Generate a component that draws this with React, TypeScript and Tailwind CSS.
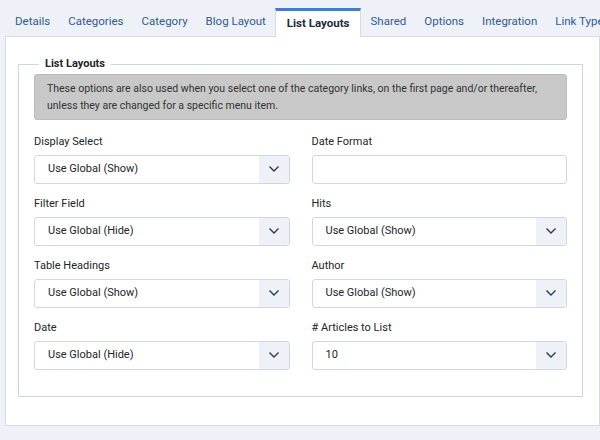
import React from "react";

const tabs = ["Details","Categories","Category","Blog Layout","List Layouts","Shared","Options","Integration","Link Type"];
const fields: [string, string | null][] = [
  ["Display Select","Use Global (Show)"],["Date Format",null],
  ["Filter Field","Use Global (Hide)"],["Hits","Use Global (Show)"],
  ["Table Headings","Use Global (Show)"],["Author","Use Global (Show)"],
  ["Date","Use Global (Hide)"],["# Articles to List","10"],
];

function Chevron() {
  return (
    <svg width="12" height="8" viewBox="0 0 12 8" fill="none" stroke="#2f3a4f" strokeWidth="1.4"><path d="M1.5 1.5 6 6l4.5-4.5"/></svg>
  );
}

export default function App() {
  return (
    <div className="w-[600px] h-[440px] bg-[#eef2f8] overflow-hidden text-[11px] text-[#22262a]" style={{fontFamily:"Roboto, sans-serif"}}>
      <div className="flex items-end h-[36px] pl-[6px] whitespace-nowrap">
        {tabs.map(t => t === "List Layouts" ? (
          <div key={t} className="shrink-0 h-[29px] px-[11px] flex items-center bg-white border-t-[3px] border-[#4a7bc6] border-x border-x-[#d6dce6] font-bold text-[#1d2a3c] text-[11.5px] -mb-px relative z-10">{t}</div>
        ) : (
          <div key={t} className="shrink-0 h-[28px] px-[9px] flex items-center text-[#2f5a96] text-[11.5px]">{t}</div>
        ))}
      </div>
      <div className="ml-[5px] bg-white border border-[#d6dce6] h-[390px] pt-[19px] pl-[12px] pr-[16px]">
        <fieldset className="border border-[#cfd5df] px-[15px] pb-[26px]">
          <legend className="px-[6px] ml-[5px] font-bold text-[#22262a] text-[11px]">List Layouts</legend>
          <div className="bg-[#c8c8c8] border border-[#bcbcbc] rounded-[3px] px-[12px] py-[5px] text-[#333] leading-[17px] text-[10.5px] mt-[1px]">
            These options are also used when you select one of the category links, on the first page and/or thereafter, unless they are changed for a specific menu item.
          </div>
          <div className="grid grid-cols-2 gap-x-[22px] gap-y-[11px] mt-[13px]">
            {fields.map(([label, val]) => (
              <div key={label}>
                <div className="mb-[5px] text-[#22262a] h-[17px] leading-[17px]">{label}</div>
                <div className="h-[29px] border border-[#d1d7e0] rounded-[3px] flex items-center">
                  {val !== null && (<>
                    <span className="flex-1 pl-[13px]">{val}</span>
                    <span className="w-[30px] h-full flex items-center justify-center bg-[#eef2f8] rounded-r-[3px]"><Chevron/></span>
                  </>)}
                </div>
              </div>
            ))}
          </div>
        </fieldset>
      </div>
    </div>
  );
}
